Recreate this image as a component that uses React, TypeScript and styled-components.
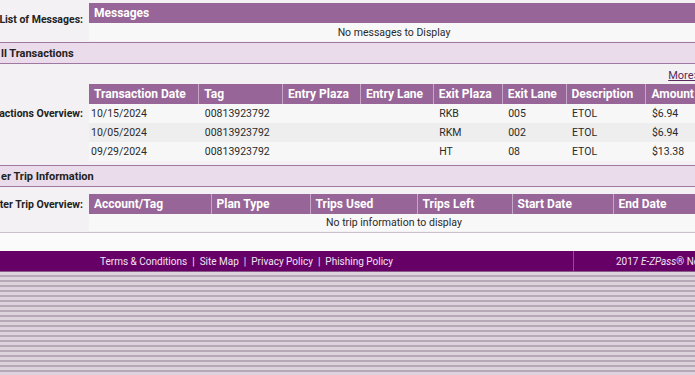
import styled, { createGlobalStyle } from 'styled-components'

const GlobalStyle = createGlobalStyle`
html, body {
    margin: 0;
    padding: 0;
    overflow: hidden;
}
body {
    font-family: Roboto, "Liberation Sans", sans-serif;
    color: #222;
    background: repeating-linear-gradient(to bottom, #ddd3dd 0px, #ddd3dd 3px, #b6a8b6 3px, #b6a8b6 5px);
}
`

const transactions = [
    { date: '10/15/2024', tag: '00813923792', exitPlaza: 'RKB', exitLane: '005', desc: 'ETOL', amount: '$6.94' },
    { date: '10/05/2024', tag: '00813923792', exitPlaza: 'RKM', exitLane: '002', desc: 'ETOL', amount: '$6.94' },
    { date: '09/29/2024', tag: '00813923792', exitPlaza: 'HT', exitLane: '08', desc: 'ETOL', amount: '$13.38' },
]

const txCols = [
    { name: 'Transaction Date', w: 110 },
    { name: 'Tag', w: 84 },
    { name: 'Entry Plaza', w: 78 },
    { name: 'Entry Lane', w: 73 },
    { name: 'Exit Plaza', w: 69 },
    { name: 'Exit Lane', w: 64 },
    { name: 'Description', w: 80 },
    { name: 'Amount', w: 52 },
]

const tripCols = [
    { name: 'Account/Tag', w: 122 },
    { name: 'Plan Type', w: 99 },
    { name: 'Trips Used', w: 107 },
    { name: 'Trips Left', w: 95 },
    { name: 'Start Date', w: 101 },
    { name: 'End Date', w: 86 },
]

const App = () => {
    return (
        <Page>
            <GlobalStyle />
            <Panel>
                <Block>
                    <Label $top={10}>List of Messages:</Label>
                    <Table>
                        <thead>
                            <tr><Th>Messages</Th></tr>
                        </thead>
                        <tbody>
                            <tr><Empty $h={18}>No messages to Display</Empty></tr>
                        </tbody>
                    </Table>
                </Block>
                <SectionTitle>ll Transactions</SectionTitle>
                <MoreRow><MoreLink href="#">More&gt;&gt;</MoreLink></MoreRow>
                <Block>
                    <Label $top={23}>Toll Transactions Overview:</Label>
                    <Table>
                        <colgroup>
                            {txCols.map(c => <col key={c.name} style={{ width: c.w }} />)}
                        </colgroup>
                        <thead>
                            <tr>{txCols.map(c => <Th key={c.name}>{c.name}</Th>)}</tr>
                        </thead>
                        <tbody>
                            {transactions.map((t, i) => (
                                <Row key={i} $odd={i % 2 === 1}>
                                    <Td $first>{t.date}</Td>
                                    <Td>{t.tag}</Td>
                                    <Td></Td>
                                    <Td></Td>
                                    <Td>{t.exitPlaza}</Td>
                                    <Td>{t.exitLane}</Td>
                                    <Td>{t.desc}</Td>
                                    <Td>{t.amount}</Td>
                                </Row>
                            ))}
                        </tbody>
                    </Table>
                </Block>
                <SectionTitle $gap>er Trip Information</SectionTitle>
                <Block $trip>
                    <Label $top={4}>Commuter Trip Overview:</Label>
                    <Table>
                        <colgroup>
                            {tripCols.map(c => <col key={c.name} style={{ width: c.w }} />)}
                        </colgroup>
                        <thead>
                            <tr>{tripCols.map(c => <Th key={c.name}>{c.name}</Th>)}</tr>
                        </thead>
                        <tbody>
                            <tr><Empty colSpan={6} $h={17}>No trip information to display</Empty></tr>
                        </tbody>
                    </Table>
                </Block>
            </Panel>
            <Spacer />
            <Footer>
                <FooterLinks>
                    <FootLink href="#">Terms &amp; Conditions</FootLink>
                    <Sep>|</Sep>
                    <FootLink href="#">Site Map</FootLink>
                    <Sep>|</Sep>
                    <FootLink href="#">Privacy Policy</FootLink>
                    <Sep>|</Sep>
                    <FootLink href="#">Phishing Policy</FootLink>
                </FooterLinks>
                <Copy>2017 <em>E-ZPass</em>® New York</Copy>
            </Footer>
        </Page>
    )
}

export default App

const Page = styled.div`
width: 705px;
`

const Panel = styled.div`
background-color: #f4f1f4;
padding-top: 3px;
border-bottom: 1px solid #c9c1c9;
`

const Block = styled.div<{ $trip?: boolean }>`
display: flex;
align-items: flex-start;
padding-right: 6px;
padding-top: ${p => (p.$trip ? '6px' : '0')};
padding-bottom: ${p => (p.$trip ? '1px' : '0')};
`

const Label = styled.div<{ $top: number }>`
width: 89px;
flex: none;
display: flex;
justify-content: flex-end;
overflow: hidden;
white-space: nowrap;
padding-top: ${p => p.$top}px;
padding-right: 6px;
box-sizing: border-box;
font-size: 10.5px;
font-weight: 700;
line-height: 13px;
`

const Table = styled.table`
flex: 1;
border-collapse: collapse;
table-layout: fixed;
font-size: 10.5px;
`

const Th = styled.th`
background-color: #976597;
color: #fff;
text-align: left;
font-size: 12px;
font-weight: 700;
height: 20px;
padding: 0 5px;
border-left: 1px solid #c7a7c7;
white-space: nowrap;
overflow: hidden;
&:first-child {
    border-left: none;
}
`

const Row = styled.tr<{ $odd: boolean }>`
background-color: ${p => (p.$odd ? '#eeeeee' : '#f7f7f7')};
`

const Td = styled.td<{ $first?: boolean }>`
height: 19px;
padding: 0 0 0 ${p => (p.$first ? '2px' : '6px')};
white-space: nowrap;
color: #2a2a2a;
`

const Empty = styled.td<{ $h: number }>`
height: ${p => p.$h}px;
padding: 0;
text-align: center;
background-color: #f8f8f8;
color: #2a2a2a;
`

const SectionTitle = styled.div<{ $gap?: boolean }>`
margin-top: ${p => (p.$gap ? '4px' : '1px')};
margin-bottom: 1px;
height: 20px;
display: flex;
align-items: center;
padding-left: 1px;
background-color: #eadcea;
border-top: 1px solid #9f77a0;
border-bottom: 1px solid #9f77a0;
font-size: 11px;
font-weight: 700;
white-space: nowrap;
`

const MoreRow = styled.div`
height: 18px;
display: flex;
align-items: center;
justify-content: flex-end;
padding-top: 1px;
`

const MoreLink = styled.a`
color: #5a2a5a;
font-size: 11px;
text-decoration: underline;
`

const Spacer = styled.div`
height: 18px;
background-color: #fcfbfc;
`

const Footer = styled.div`
height: 20px;
display: flex;
align-items: center;
background-color: #660066;
border-bottom: 1px solid #8a5a8a;
color: #f2e2f2;
font-size: 10px;
white-space: nowrap;
`

const FooterLinks = styled.div`
flex: none;
width: 574px;
height: 100%;
display: flex;
align-items: center;
padding-left: 100px;
box-sizing: border-box;
border-right: 1px solid #8e4f8e;
`

const FootLink = styled.a`
color: #f2e2f2;
text-decoration: none;
`

const Sep = styled.span`
margin: 0 5px;
`

const Copy = styled.div`
flex: none;
padding-left: 42px;
em {
    font-style: italic;
}
`
